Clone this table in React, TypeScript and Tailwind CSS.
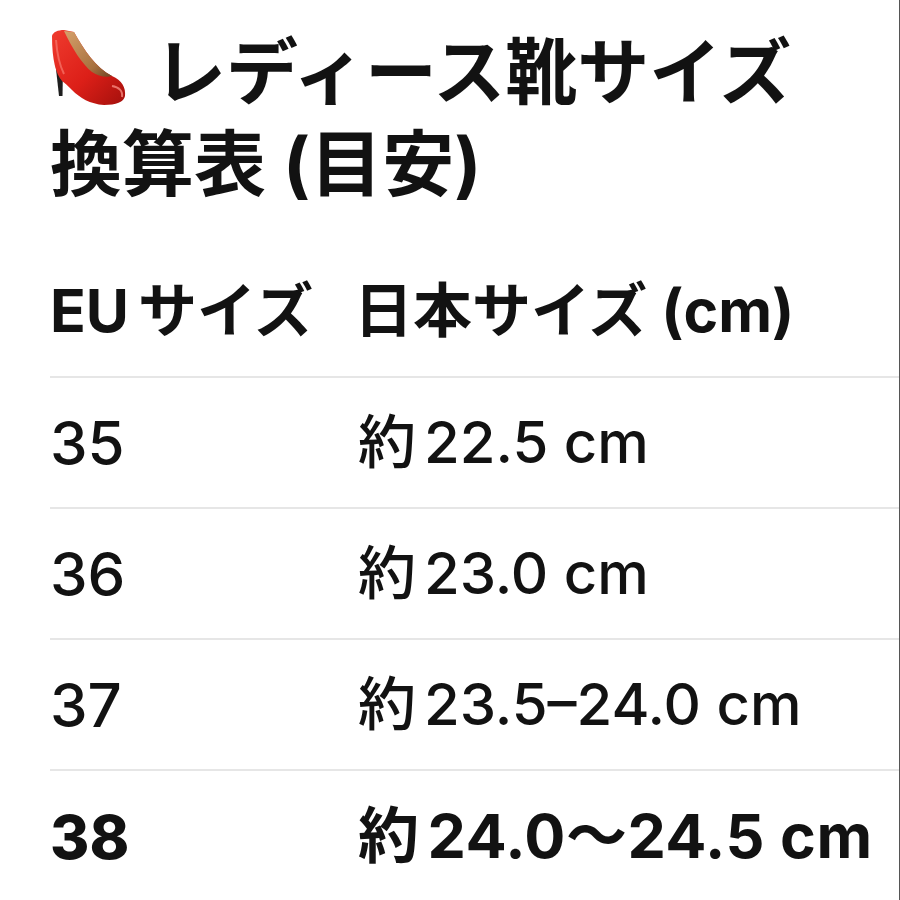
const sans = "font-['Inter','Noto_Sans_CJK_JP',sans-serif]"

const rows = [
  { eu: '35', jp: '22.5 cm', strong: false },
  { eu: '36', jp: '23.0 cm', strong: false },
  { eu: '37', jp: '23.5–24.0 cm', strong: false },
  { eu: '38', jp: '24.0〜24.5 cm', strong: true },
]

function HighHeel() {
  return (
    <svg viewBox="0 0 76 76" className="inline-block h-[76px] w-[76px] align-[-8px]">
      <defs>
        <linearGradient id="red" x1="0" y1="0" x2="1" y2="1">
          <stop offset="0" stopColor="#ef3b2e" />
          <stop offset="0.55" stopColor="#dc1f18" />
          <stop offset="1" stopColor="#a3100c" />
        </linearGradient>
        <linearGradient id="tan" x1="0" y1="0" x2="1" y2="1">
          <stop offset="0" stopColor="#d6a06a" />
          <stop offset="0.7" stopColor="#a8713f" />
          <stop offset="1" stopColor="#6e4424" />
        </linearGradient>
      </defs>
      {/* heel */}
      <path d="M5 30 L13 34 L12.5 66 L9 66 Z" fill="#1e1e1e" />
      {/* shoe body */}
      <path
        d="M2 6 C3 2 8 0 14 0 L24 2 C34 20 46 38 62 46 C72 50 76 58 75 66 C74 72 66 75 54 75 C40 74 30 68 22 60 C18 56 15 53 12 51 C6 44 2 30 2 6 Z"
        fill="url(#red)"
      />
      {/* inside */}
      <path d="M14 1 L24 2 C34 20 46 38 62 46 C56 48 48 46 42 42 C32 34 22 18 14 1 Z" fill="url(#tan)" />
      <path d="M6 10 C7 24 10 36 14 44" stroke="#f7796d" strokeWidth="2" fill="none" opacity="0.7" />
      <path d="M62 56 C69 57 73 61 72 67" stroke="#ff9a8f" strokeWidth="2" fill="none" opacity="0.7" />
    </svg>
  )
}

export default function App() {
  return (
    <div className={`h-[900px] w-[900px] overflow-hidden border-r border-[#555] bg-white text-[#121212] ${sans}`}>
      <div className="pl-[50px] pt-[26px]">
        {/* Title */}
        <h1 className="text-[72px] font-bold leading-[92px]">
          <span className="block whitespace-nowrap">
            <HighHeel />
            <span className="ml-[28px]">レディース靴サイズ</span>
          </span>
          <span className="block whitespace-nowrap">換算表 (目安)</span>
        </h1>

        {/* Table */}
        <div className="mt-[37px]">
          <div className="flex h-[131px] items-center border-b-2 border-[#e6e6e6] text-[59px] font-bold">
            <div className="w-[304px] whitespace-nowrap">
              EU<span className="ml-[9px]">サイズ</span>
            </div>
            <div className="whitespace-nowrap">日本サイズ (cm)</div>
          </div>
          {rows.map((r, i) => (
            <div
              key={r.eu}
              className={`flex h-[131px] items-center ${i < rows.length - 1 ? 'border-b-2 border-[#e6e6e6]' : ''} ${
                r.strong ? 'font-bold' : 'font-medium'
              }`}
            >
              <div className={`w-[308px] text-[60px] ${r.strong ? 'font-extrabold' : ''}`}>{r.eu}</div>
              <div className={`whitespace-nowrap ${r.strong ? 'text-[61px] tracking-[0.5px]' : 'text-[58px]'}`}>
                約<span className="ml-[8px]">{r.jp}</span>
              </div>
            </div>
          ))}
        </div>
      </div>
    </div>
  )
}
